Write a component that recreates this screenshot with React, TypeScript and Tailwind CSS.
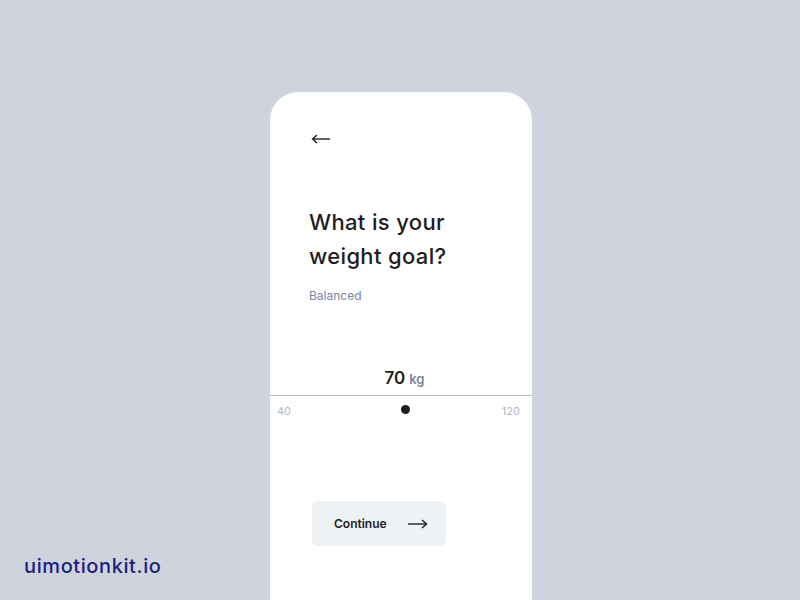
export default function App() {
  return (
    <div className="relative w-[800px] h-[600px] overflow-hidden bg-[#cfd3de] font-['Inter',sans-serif]">
      <div className="flex justify-center pt-[92px] pl-[2px]">
        <div className="w-[262px] h-[560px] bg-white rounded-t-[28px] flex flex-col">
          {/* Back */}
          <div className="pl-[41px] pt-[41px]">
            <svg width="20" height="12" viewBox="0 0 20 12" fill="none" stroke="#1f1d24" strokeWidth="1.4">
              <path d="M2 6 H19" />
              <path d="M6 2 L1.5 6 L6 10" />
            </svg>
          </div>

          {/* Question */}
          <div className="pl-[39px] mt-[60px]">
            <h1 className="text-[22px] leading-[34px] font-medium text-[#1f1c22] tracking-[0.35px]">
              What is your
              <br />
              weight goal?
            </h1>
            <p className="mt-[15px] text-[12px] leading-[16px] text-[#80859f]">Balanced</p>
          </div>

          {/* Scale */}
          <div className="mt-[63px] flex items-baseline justify-center gap-[4px] pl-[7px]">
            <span className="text-[17px] leading-[22px] font-semibold text-[#1f1c22]">70</span>
            <span className="text-[13px] font-semibold text-[#7b8099]">kg</span>
          </div>
          <div className="mt-[5px] h-[1.5px] bg-[#b7bbc8]" />
          <div className="flex items-start justify-between px-[7px] pt-[8px]">
            <span className="text-[11px] leading-[14px] text-[#b3b7c6]">40</span>
            <div className="mt-[1px] w-[9px] h-[9px] rounded-full bg-[#1f1d24] ml-[18px]" />
            <span className="text-[11px] leading-[14px] text-[#b3b7c6] mr-[5px]">120</span>
          </div>

          {/* Continue */}
          <div className="pl-[42px] mt-[83px]">
            <button className="w-[134px] h-[45px] rounded-[6px] bg-[#eff2f5] flex items-center pl-[22px] gap-[21px]">
              <span className="text-[12px] font-semibold text-[#1f1c22]">Continue</span>
              <svg width="20" height="10" viewBox="0 0 20 10" fill="none" stroke="#1f1d24" strokeWidth="1.4">
                <path d="M0 5 H18.5" />
                <path d="M14 1 L18.5 5 L14 9" />
              </svg>
            </button>
          </div>
        </div>
      </div>

      <div className="absolute left-[24px] top-[553px] text-[20px] leading-[26px] font-medium tracking-[0.6px] text-[#1b1f7d]">
        uimotionkit.io
      </div>
    </div>
  );
}
